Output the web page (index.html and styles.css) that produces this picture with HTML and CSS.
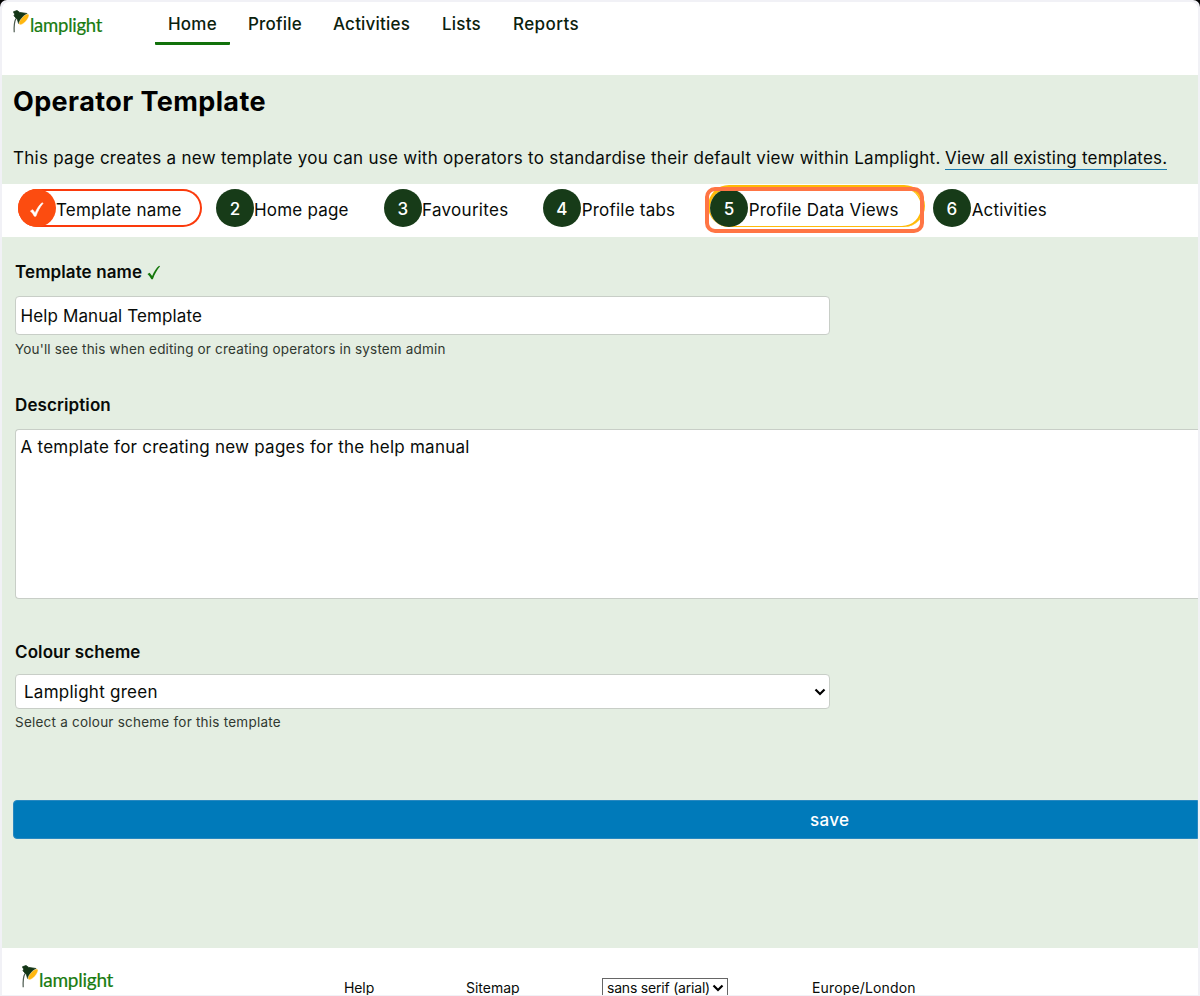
FILE: index.html
```html
<!DOCTYPE html>
<html lang="en">
<head>
<meta charset="utf-8">
<title>Operator Template</title>
<link rel="stylesheet" href="styles.css">
</head>
<body>
<svg class="defs" width="0" height="0">
  <symbol id="lamp" viewBox="0 0 17 23">
    <path d="M3 8.500C1 12 .9 16 1.200 22.200" fill="none" stroke="#4b594e" stroke-width="1.200"/>
    <path d="M.4 1.800 4 .5 6.700 2.400 14 3.500 5.600 13.500 4.500 9.700 1 5.800 1.700 4.200Z" fill="#143616" stroke="#143616" stroke-linejoin="round" stroke-width=".8"/>
    <ellipse cx="11" cy="9.400" rx="6.800" ry="2.600" transform="rotate(-48 11 9.400)" fill="#ffb70f" stroke="#fff" stroke-width=".4"/>
  </symbol>
  <symbol id="tick" viewBox="0 0 14 16">
    <path d="M0 9.500 2.400 8.200 5 11.700C7 7 9.600 3 12.400.8L13.500 1.400C10.300 5 7.700 10 5.800 15.200H4.200C3.200 13.200 1.800 11 0 9.500Z" fill="currentColor"/>
  </symbol>
  <symbol id="chevron" viewBox="0 0 12 8">
    <path d="M1.500 1.500 6 6 10.500 1.500" fill="none" stroke="#000" stroke-width="2.200"/>
  </symbol>
</svg>
<div class="page">
  <header class="header">
    <a class="logo"><svg class="lamp"><use href="#lamp"/></svg><span class="brand">lamplight</span></a>
    <nav class="nav">
      <a class="nav-item active">Home</a>
      <a class="nav-item profile">Profile</a>
      <a class="nav-item activities">Activities</a>
      <a class="nav-item lists">Lists</a>
      <a class="nav-item reports">Reports</a>
    </nav>
  </header>
  <main class="main">
    <h1 class="title">Operator Template</h1>
    <p class="intro"><span class="intro-text">This page creates a new template you can use with operators to standardise their default view within Lamplight.</span><a class="intro-link">View all existing templates.</a></p>
    <div class="steps">
      <div class="step current"><span class="dot"><svg class="dot-tick"><use href="#tick"/></svg></span><span>Template name</span></div>
      <div class="step s2"><span class="dot">2</span><span>Home page</span></div>
      <div class="step s3"><span class="dot">3</span><span>Favourites</span></div>
      <div class="step s4"><span class="dot">4</span><span>Profile tabs</span></div>
      <div class="step s5"><span class="dot">5</span><span>Profile Data Views</span><i class="highlight"></i></div>
      <div class="step s6"><span class="dot">6</span><span>Activities</span></div>
    </div>
    <form class="form">
      <label class="label"><span>Template name</span><svg class="label-tick"><use href="#tick"/></svg></label>
      <div class="field input">Help Manual Template</div>
      <p class="hint">You'll see this when editing or creating operators in system admin</p>
      <label class="label l-desc">Description</label>
      <div class="field textarea">A template for creating new pages for the help manual</div>
      <label class="label l-colour">Colour scheme</label>
      <div class="field select"><span>Lamplight green</span><svg class="chevron"><use href="#chevron"/></svg></div>
      <p class="hint h-colour">Select a colour scheme for this template</p>
      <button class="save" type="button">save</button>
    </form>
  </main>
  <footer class="footer">
    <a class="logo footer-logo"><svg class="lamp"><use href="#lamp"/></svg><span class="brand">lamplight</span></a>
    <a class="f-help">Help</a>
    <a class="f-map">Sitemap</a>
    <div class="font-select"><span>sans serif (arial)</span><svg class="chevron"><use href="#chevron"/></svg></div>
    <span class="f-zone">Europe/London</span>
  </footer>
</div>
</body>
</html>
```
FILE: styles.css
```css
* { box-sizing: border-box; }
html { background: #000; overflow: hidden; }
body {
  margin: 0;
  height: 996px;
  overflow: hidden;
  padding: 2px 2px 1px;
  background: #f1f1f6;
  border-radius: 7px 7px 0 0;
  font-family: Inter, "Liberation Sans", sans-serif;
  font-size: 17px;
  color: #080b08;
}
p, h1 { margin: 0; }
.defs { display: block; position: absolute; }
.page {
  height: 993px;
  overflow: hidden;
  background: #fff;
  border-radius: 7px 7px 0 0;
  white-space: nowrap;
}
.header { display: flex; height: 73px; }
.logo { display: flex; width: 92px; height: 26px; margin: 8px 0 0 11px; }
.lamp { width: 17px; height: 23px; flex: none; }
.brand {
  font: 400 18.5px/26px Lato, sans-serif;
  letter-spacing: -.25px;
  color: #187b10;
  margin-top: 2px;
  -webkit-text-stroke: .2px #187b10;
}
.nav { display: flex; margin-left: 50px; letter-spacing: .2px; }
.nav-item { height: 43px; padding-left: 13px; line-height: 44px; font-weight: 500; color: #0b210d; width: 75px; margin-right: 5px; }
.nav-item.active { border-bottom: 3px solid #11710b; border-radius: 1px; }
.nav-item.profile { width: 80px; }
.nav-item.activities { width: 104px; }
.nav-item.lists { width: 66px; }
.nav-item.reports { letter-spacing: .4px; }
.main { height: 873px; background: #e4eee2; }
.title { height: 54px; padding-left: 11px; line-height: 54px; font-size: 27px; font-weight: 700; letter-spacing: .4px; color: #000; }
.intro { display: flex; height: 55px; padding: 17px 0 0 11px; line-height: 24px; letter-spacing: .19px; }
.intro-text { width: 932px; letter-spacing: .275px; }
.intro-link { height: 24px; border-bottom: 1px solid #1a79ae; }
.steps { display: flex; height: 53px; padding: 5px 0 0 16px; background: #fff; letter-spacing: .2px; }
.step { position: relative; display: flex; height: 38px; line-height: 42px; }
.dot {
  display: flex; align-items: center; justify-content: center;
  flex: none; width: 38px; height: 38px; border-radius: 50%;
  background: #173b18; color: #fff; font-weight: 500; padding-top: 2px;
}
.current { width: 184px; margin-right: 14px; border-radius: 19px; box-shadow: inset 0 0 0 2px #fb3a0c; }
.current .dot { background: #fc4c10; }
.dot-tick { width: 14px; height: 15px; stroke: #fff; stroke-width: .7px; }
.s2 { width: 168px; }
.s3 { width: 159px; letter-spacing: .3px; }
.s4 { width: 167px; letter-spacing: .22px; }
.s5 { width: 213px; margin-right: 10px; border-radius: 19px; box-shadow: inset -2px -1px 0 #ffba08, 0 -2px 0 2px #ffba08; }
.s5 .dot, .s4 .dot, .s6 .dot { margin-right: .7px; }
.highlight { position: absolute; left: -5px; top: -2px; width: 219px; height: 46px; border: 4px solid #ff7544; border-radius: 10px; }
.form { padding-left: 13px; }
.label { display: flex; align-items: center; height: 24px; font-weight: 600; letter-spacing: .1px; margin-top: 23px; }
.label-tick { width: 14px; height: 15px; margin-left: 5px; color: #15770c; }
.field { background: #fff; border: 1px solid #c8cec7; border-radius: 4px; padding-left: 4.5px; letter-spacing: .25px; }
.input { width: 815px; height: 39px; margin-top: 12px; line-height: 38px; letter-spacing: .12px; }
.hint { height: 20px; margin-top: 4px; line-height: 20px; font-size: 13.5px; letter-spacing: .17px; color: #303830; }
.h-colour { margin-top: 3px; letter-spacing: .23px; }
.l-desc { margin-top: 34px; }
.textarea { height: 170px; margin-top: 12px; line-height: 35px; border-right: 0; border-radius: 4px 0 0 4px; }
.l-colour { margin-top: 40px; padding-top: 1px; }
.select { display: flex; align-items: center; justify-content: space-between; width: 815px; height: 35px; margin-top: 11px; padding: 0 3px 0 8px; }
.chevron { width: 12px; height: 8px; flex: none; }
.save {
  display: block; width: 1185px; height: 39px; margin: 68px 0 0 -2px; padding: 0 0 0 796px;
  text-align: left; border: 1px solid #2888c0; border-radius: 4px 0 0 4px;
  background: #007aba; color: #fff; font: 500 17px/38px Inter, sans-serif; letter-spacing: .35px;
}
.footer { display: flex; padding-top: 16px; font-size: 14px; line-height: 48px; }
.footer-logo { margin: 1px 0 0 20px; width: 322px; }
.footer-logo .brand { font-size: 19px; }
.f-help { width: 122px; letter-spacing: -.1px; }
.f-map { width: 136px; }
.font-select {
  display: flex; align-items: center; justify-content: space-between;
  width: 126px; height: 20px; margin-top: 14px; padding: 0 3px 0 4px; border: 1px solid #666; line-height: 18px; letter-spacing: -.2px;
}
.f-zone { margin-left: 84px; letter-spacing: .15px; }
```
